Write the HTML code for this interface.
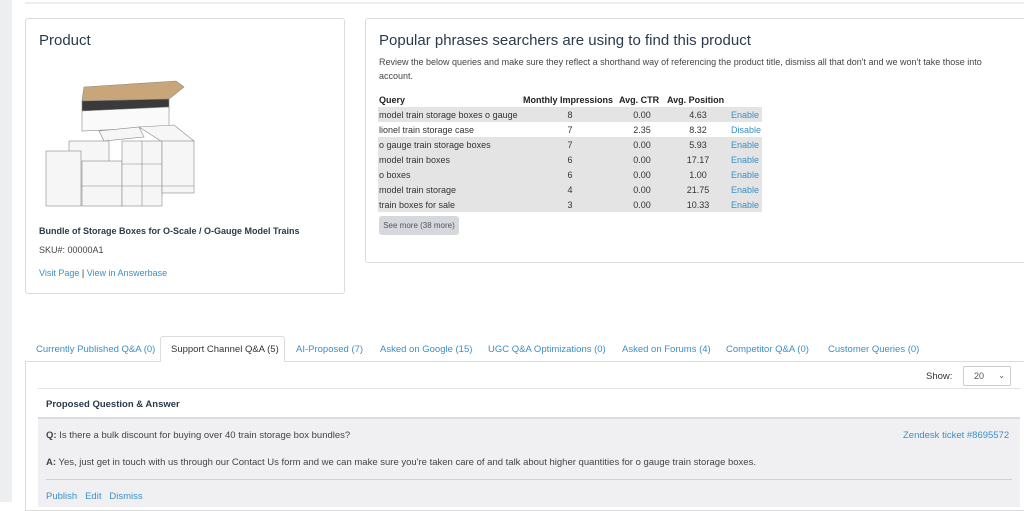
<!DOCTYPE html>
<html><head><style>
*{box-sizing:border-box;margin:0;padding:0}
body{width:1024px;height:502px;overflow:hidden;background:#fff;font-family:"Liberation Sans",sans-serif;color:#333;position:relative;font-size:11px}
.abs{position:absolute}
a{color:#3a8fc7;text-decoration:none}
.card{position:absolute;border:1px solid #dcdcdc;border-radius:3px;background:#fff}
table{border-collapse:collapse;font-size:9px;table-layout:fixed}
td,th{height:15px;padding:0 1px;white-space:nowrap;overflow:hidden}
th{font-weight:bold;text-align:left;color:#222}
tr.g td{background:#e4e4e4}
.c{text-align:center}
.tab{position:absolute;top:344px;font-size:9.5px;color:#3a8fc7}
</style></head><body>
<div class="abs" style="left:0;top:0;width:12px;height:502px;background:#eceef0"></div>
<div class="abs" style="left:25px;top:2px;width:999px;height:2px;background:#eceef0"></div>

<div class="card" style="left:25px;top:18px;width:320px;height:276px">
<div class="abs" style="left:13px;top:13px;font-size:15px;color:#2b3a4a">Product</div>
<svg class="abs" style="left:18px;top:60px" width="160" height="150" viewBox="0 0 160 150">
<g stroke="#888" stroke-width="0.6" fill="#f6f6f6">
<polygon points="38,22 125,20 140,8 132,2 40,8" fill="#c9a57a"/>
<polygon points="38,22 125,20 125,30 38,32" fill="#3a3a3a"/>
<polygon points="38,32 125,28 125,48 38,52" fill="#fafafa"/>
<polygon points="55,52 95,48 100,58 60,62"/>
<polygon points="95,48 130,46 150,62 120,64"/>
<rect x="25" y="62" width="40" height="45"/>
<rect x="2" y="72" width="35" height="55"/>
<rect x="38" y="82" width="40" height="45"/>
<rect x="78" y="62" width="40" height="65"/>
<rect x="118" y="62" width="32" height="52"/>
<line x1="78" y1="85" x2="118" y2="85"/>
<line x1="38" y1="107" x2="150" y2="107"/>
<line x1="98" y1="62" x2="98" y2="127"/>
</g></svg>
<div class="abs" style="left:13px;top:207px;font-size:9px;font-weight:bold;color:#2b3a4a">Bundle of Storage Boxes for O-Scale / O-Gauge Model Trains</div>
<div class="abs" style="left:13px;top:226px;font-size:9px;color:#444">SKU#: 00000A1</div>
<div class="abs" style="left:13px;top:249px;font-size:9px"><a>Visit Page</a> | <a>View in Answerbase</a></div>
</div>

<div class="card" style="left:365px;top:18px;width:670px;height:245px">
<div class="abs" style="left:13px;top:13px;font-size:15px;color:#2b3a4a">Popular phrases searchers are using to find this product</div>
<div class="abs" style="left:13px;top:36px;width:615px;font-size:9px;line-height:14px;color:#444">Review the below queries and make sure they reflect a shorthand way of referencing the product title, dismiss all that don't and we won't take those into account.</div>
<table class="abs" style="left:12px;top:73px;width:384px">
<colgroup><col style="width:144px"><col style="width:96px"><col style="width:48px"><col style="width:64px"><col style="width:32px"></colgroup>
<tr><th>Query</th><th>Monthly Impressions</th><th>Avg. CTR</th><th>Avg. Position</th><th></th></tr>
<tr class="g"><td>model train storage boxes o gauge</td><td class="c">8</td><td class="c">0.00</td><td class="c">4.63</td><td><a>Enable</a></td></tr>
<tr><td>lionel train storage case</td><td class="c">7</td><td class="c">2.35</td><td class="c">8.32</td><td><a>Disable</a></td></tr>
<tr class="g"><td>o gauge train storage boxes</td><td class="c">7</td><td class="c">0.00</td><td class="c">5.93</td><td><a>Enable</a></td></tr>
<tr class="g"><td>model train boxes</td><td class="c">6</td><td class="c">0.00</td><td class="c">17.17</td><td><a>Enable</a></td></tr>
<tr class="g"><td>o boxes</td><td class="c">6</td><td class="c">0.00</td><td class="c">1.00</td><td><a>Enable</a></td></tr>
<tr class="g"><td>model train storage</td><td class="c">4</td><td class="c">0.00</td><td class="c">21.75</td><td><a>Enable</a></td></tr>
<tr class="g"><td>train boxes for sale</td><td class="c">3</td><td class="c">0.00</td><td class="c">10.33</td><td><a>Enable</a></td></tr>
</table>
<div class="abs" style="left:13px;top:197px;width:80px;height:19px;background:#d5d8dc;border-radius:3px;font-size:8px;color:#555;line-height:19px;text-align:center">See more (38 more)</div>
</div>

<div class="abs" style="left:160px;top:336px;width:125px;height:26px;border:1px solid #dcdcdc;border-bottom:none;border-radius:3px 3px 0 0;background:#fff;z-index:2"></div>
<div class="abs" style="left:25px;top:361px;width:1010px;height:150px;border:1px solid #dcdcdc;background:#fff"></div>
<div class="tab" style="left:36px">Currently Published Q&amp;A (0)</div>
<div class="tab" style="left:171px;color:#333;z-index:3">Support Channel Q&amp;A (5)</div>
<div class="tab" style="left:296px">AI-Proposed (7)</div>
<div class="tab" style="left:380px">Asked on Google (15)</div>
<div class="tab" style="left:488px">UGC Q&amp;A Optimizations (0)</div>
<div class="tab" style="left:622px">Asked on Forums (4)</div>
<div class="tab" style="left:726px">Competitor Q&amp;A (0)</div>
<div class="tab" style="left:828px">Customer Queries (0)</div>

<div class="abs" style="left:926px;top:371px;font-size:9.5px;color:#333">Show:</div>
<div class="abs" style="left:963px;top:366px;width:48px;height:20px;border:1px solid #ccc;border-radius:2px;font-size:9px;color:#555;line-height:18px;padding-left:10px">20<span style="position:absolute;right:5px;font-size:8px">&#8964;</span></div>
<div class="abs" style="left:38px;top:388px;width:982px;height:1px;background:#e4e4e4"></div>
<div class="abs" style="left:46px;top:399px;font-size:9.5px;font-weight:bold;color:#2b3a4a">Proposed Question &amp; Answer</div>
<div class="abs" style="left:38px;top:417px;width:982px;height:90px;background:#f0f0f3;border-top:2px solid #dadbdf"></div>
<div class="abs" style="left:46px;top:430px;font-size:9.5px;color:#444"><b>Q:</b> Is there a bulk discount for buying over 40 train storage box bundles?</div>
<div class="abs" style="left:903px;top:430px;font-size:9.5px"><a>Zendesk ticket #8695572</a></div>
<div class="abs" style="left:46px;top:457px;font-size:9.5px;color:#444"><b>A:</b> Yes, just get in touch with us through our Contact Us form and we can make sure you're taken care of and talk about higher quantities for o gauge train storage boxes.</div>
<div class="abs" style="left:46px;top:479px;width:966px;height:1px;background:#cfd0d4"></div>
<div class="abs" style="left:46px;top:491px;font-size:9.5px"><a>Publish</a>&nbsp;&nbsp;&nbsp;<a>Edit</a>&nbsp;&nbsp;&nbsp;<a>Dismiss</a></div>
</body></html>
